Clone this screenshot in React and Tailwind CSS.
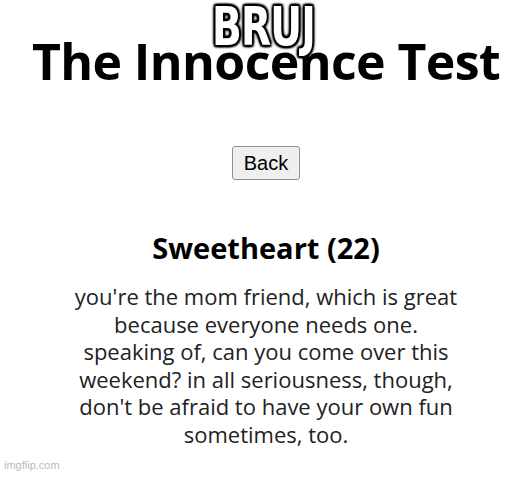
export default function App() {
  return (
    <div className="relative w-[520px] h-[479px] bg-white overflow-hidden" style={{ fontFamily: '"Open Sans", "Noto Sans", sans-serif' }}>
      <div className="flex flex-col items-center pl-[12px]">
        <h1 className="mt-[31px] text-[50px] leading-[60px] font-bold text-black tracking-[-0.6px] whitespace-nowrap">The Innocence Test</h1>
        <button className="mt-[55px] px-[11px] h-[34px] border border-[#8f8f8f] rounded-[3px] bg-[#efefef] text-[20px] text-black" style={{ fontFamily: '"Liberation Sans", Arial, sans-serif' }}>
          Back
        </button>
        <h2 className="mt-[50px] text-[29px] leading-[36px] font-bold text-black">Sweetheart (22)</h2>
        <p className="mt-[17px] text-center text-[22px] leading-[27.6px] text-[#222] whitespace-nowrap">
          you're the mom friend, which is great<br />
          because everyone needs one.<br />
          speaking of, can you come over this<br />
          weekend? in all seriousness, though,<br />
          don't be afraid to have your own fun<br />
          sometimes, too.
        </p>
      </div>
      <div
        className="absolute left-[212px] top-0 origin-left scale-x-[0.82] text-white text-[53px] font-bold leading-none tracking-[-1px]"
        style={{
          fontFamily: '"DejaVu Sans Condensed", "Liberation Sans Narrow", sans-serif',
          textShadow: '2px 2px 2px #000, -2px -2px 2px #000, 2px -2px 2px #000, -2px 2px 2px #000, 0 2px 2px #000, 0 -2px 2px #000, 2px 0 2px #000, -2px 0 2px #000, 0 0 5px #000',
        }}
      >
        BRUJ
      </div>
      <div className="absolute left-[4px] bottom-[6px] text-[11px] text-[#bbb]" style={{ fontFamily: '"Liberation Sans", Arial, sans-serif' }}>imgflip.com</div>
    </div>
  );
}
